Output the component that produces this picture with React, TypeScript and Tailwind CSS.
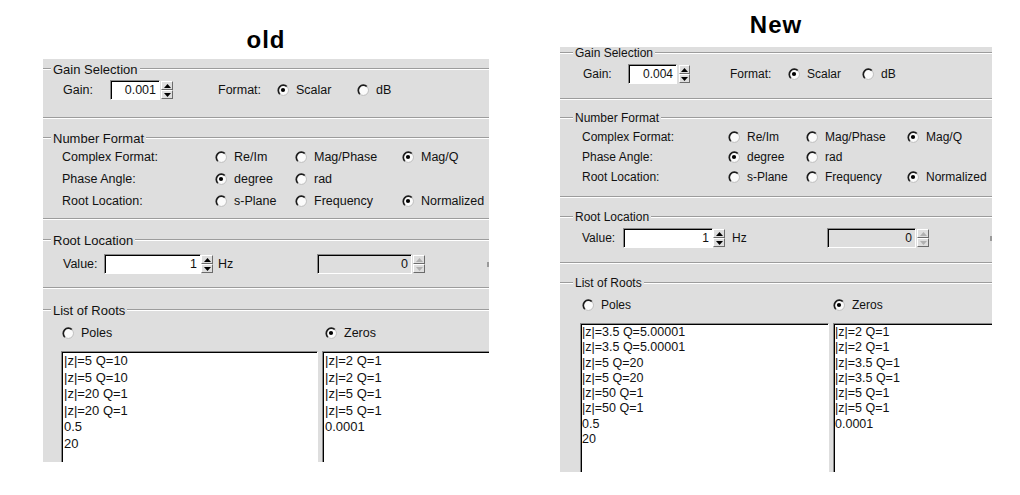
import React from 'react';

type Opt = [string, boolean];

const NUM_ROWS: { label: string; opts: Opt[] }[] = [
  { label: 'Complex Format:', opts: [['Re/Im', false], ['Mag/Phase', false], ['Mag/Q', true]] },
  { label: 'Phase Angle:', opts: [['degree', true], ['rad', false]] },
  { label: 'Root Location:', opts: [['s-Plane', false], ['Frequency', false], ['Normalized', true]] },
];

const OLD = {
  title: 'old',
  col: 'ml-[43px] w-[446px]',
  head: 'h-[59px] pt-[28px]',
  panel: 'h-[403px] pt-[3px]',
  titleH: 'h-[14px]',
  dash: 'w-[8px]',
  titleText: 'text-[13px]',
  label: 'text-[12.5px]',
  gainBox: 'h-[41px] pt-[5px]',
  gainPl: 'pl-[20px]',
  gainLabel: 'w-[47px]',
  gainInput: 'w-[50px]',
  gainSpin: 'ml-[1px] w-[12px]',
  formatGap: 'ml-[45px] w-[59px]',
  scalarW: 'w-[80px]',
  gain: '0.001',
  gap1: 'mt-[12px]',
  numBox: 'h-[73px] pt-[1px]',
  rowH: 'h-[22px]',
  numPl: 'pl-[19px]',
  numLabel: 'w-[153px]',
  cols: ['w-[80px]', 'w-[107px]', 'w-[84px]'],
  gap2: 'mt-[13px]',
  valBox: 'h-[40px] pt-[7px]',
  valPl: 'pl-[20px]',
  valLabel: 'w-[41px]',
  valInput: 'w-[97px]',
  hz: 'ml-[5px] w-[99px]',
  disInput: 'w-[95px]',
  gap3: 'mt-[14px]',
  rootsBox: 'pt-[8px]',
  polesPl: 'pl-[19px]',
  polesW: 'w-[263px]',
  listMl: 'ml-[18px]',
  leftW: 'w-[257px]',
  listText: 'text-[13px] leading-[16.6px] pl-[2px]',
  poles: ['|z|=5 Q=10', '|z|=5 Q=10', '|z|=20 Q=1', '|z|=20 Q=1', '0.5', '20'],
  zeros: ['|z|=2 Q=1', '|z|=2 Q=1', '|z|=5 Q=1', '|z|=5 Q=1', '0.0001'],
};

const NEW = {
  title: 'New',
  col: 'ml-[71px] w-[432px]',
  head: 'h-[47px] pt-[13px]',
  panel: 'h-[425px] pt-0',
  titleH: 'h-[12px]',
  dash: 'w-[13px]',
  titleText: 'text-[12px]',
  label: 'text-[12px]',
  gainBox: 'h-[39px] pt-[6px]',
  gainPl: 'pl-[23px]',
  gainLabel: 'w-[45px]',
  gainInput: 'w-[49px]',
  gainSpin: 'ml-[2px] w-[11px]',
  formatGap: 'ml-[40px] w-[58px]',
  scalarW: 'w-[74px]',
  gain: '0.004',
  gap1: 'mt-[12px]',
  numBox: 'h-[72px] pt-[3px]',
  rowH: 'h-[20px]',
  numPl: 'pl-[22px]',
  numLabel: 'w-[146px]',
  cols: ['w-[78px]', 'w-[101px]', 'w-[80px]'],
  gap2: 'mt-[13px]',
  valBox: 'h-[39px] pt-[5px]',
  valPl: 'pl-[22px]',
  valLabel: 'w-[41px]',
  valInput: 'w-[90px]',
  hz: 'ml-[7px] w-[95px]',
  disInput: 'w-[89px]',
  gap3: 'mt-[13px]',
  rootsBox: 'pt-[8px]',
  polesPl: 'pl-[22px]',
  polesW: 'w-[251px]',
  listMl: 'ml-[20px]',
  leftW: 'w-[249px]',
  listText: 'text-[12.5px] leading-[15.3px] pl-[1px]',
  poles: ['|z|=3.5 Q=5.00001', '|z|=3.5 Q=5.00001', '|z|=5 Q=20', '|z|=5 Q=20', '|z|=50 Q=1', '|z|=50 Q=1', '0.5', '20'],
  zeros: ['|z|=2 Q=1', '|z|=2 Q=1', '|z|=3.5 Q=1', '|z|=3.5 Q=1', '|z|=5 Q=1', '|z|=5 Q=1', '0.0001'],
};

type Cfg = typeof OLD;

const Groove = ({ className = '' }: { className?: string }) => (
  <div className={`h-0 border-t border-b border-t-[#9c9c9c] border-b-white ${className}`} />
);

function GroupTitle({ title, c }: { title: string; c: Cfg }) {
  return (
    <div className={`flex items-center ${c.titleH}`}>
      <Groove className={`shrink-0 ${c.dash}`} />
      <span className={`px-[2px] whitespace-nowrap leading-none ${c.titleText}`}>{title}</span>
      <Groove className="flex-1" />
    </div>
  );
}

// sunken round radio, dark upper-left rim
function Radio({ checked }: { checked?: boolean }) {
  return (
    <svg width="12" height="12" viewBox="0 0 12 12" className="shrink-0">
      <circle cx="6" cy="6" r="5" fill="#fbfbfb" />
      <path d="M2.9 10.1 A5 5 0 0 1 9.9 2.6" stroke="#1c1c1c" strokeWidth="1.7" fill="none" />
      <path d="M9.9 2.6 A5 5 0 0 1 2.9 10.1" stroke="#c4c4c4" strokeWidth="1" fill="none" />
      {checked && <circle cx="6" cy="6" r="2.1" fill="#000" />}
    </svg>
  );
}

function RadioItem({ label, checked, w = '' }: { label: string; checked?: boolean; w?: string }) {
  return (
    <div className={`flex items-center shrink-0 ${w}`}>
      <Radio checked={checked} />
      <span className="ml-[7px] whitespace-nowrap">{label}</span>
    </div>
  );
}

function Field({ w, value, disabled }: { w: string; value: string; disabled?: boolean }) {
  return (
    <div
      className={`h-[20px] shrink-0 flex items-center justify-end pr-[3px] leading-none border border-t-[#8a8a8a] border-l-[#8a8a8a] border-r-white border-b-white shadow-[inset_1px_1px_0_#000] ${disabled ? 'bg-[#dedede]' : 'bg-white'} ${w}`}
    >
      {value}
    </div>
  );
}

function Arrow({ up, color }: { up?: boolean; color: string }) {
  return (
    <svg width="7" height="4" viewBox="0 0 7 4">
      <polygon points={up ? '0,4 3.5,0 7,4' : '0,0 3.5,4 7,0'} fill={color} />
    </svg>
  );
}

function Spin({ disabled, className }: { disabled?: boolean; className: string }) {
  const color = disabled ? '#b0b0b0' : '#000';
  const half = 'flex-1 flex items-center justify-center bg-[#dedede] border border-t-white border-l-white border-r-[#6b6b6b] border-b-[#6b6b6b]';
  return (
    <div className={`h-[18px] flex flex-col shrink-0 ${className}`}>
      <div className={half}>
        <Arrow up color={color} />
      </div>
      <div className={half}>
        <Arrow color={color} />
      </div>
    </div>
  );
}

function ListBox({ w, rows, c }: { w: string; rows: string[]; c: Cfg }) {
  return (
    <div
      className={`h-[300px] shrink-0 bg-white border border-t-[#8a8a8a] border-l-[#8a8a8a] border-r-white border-b-white shadow-[inset_1px_1px_0_#000] pt-[1px] ${c.listText} ${w}`}
    >
      {rows.map((r, i) => (
        <div key={i} className="whitespace-nowrap">{r}</div>
      ))}
    </div>
  );
}

function Shot({ c }: { c: Cfg }) {
  return (
    <div className={`shrink-0 ${c.col}`}>
      <div className={`text-center text-[24px] font-bold leading-[24px] tracking-[1px] ${c.head}`}>{c.title}</div>
      <div className={`bg-[#dedede] overflow-hidden text-[#111] ${c.panel} ${c.label}`}>
        <GroupTitle title="Gain Selection" c={c} />
        <div className={c.gainBox}>
          <div className={`flex items-center h-[18px] ${c.gainPl}`}>
            <span className={`shrink-0 ${c.gainLabel}`}>Gain:</span>
            <Field w={`h-[18px] ${c.gainInput}`} value={c.gain} />
            <Spin className={c.gainSpin} />
            <span className={`shrink-0 ${c.formatGap}`}>Format:</span>
            <RadioItem w={c.scalarW} checked label="Scalar" />
            <RadioItem label="dB" />
          </div>
        </div>
        <Groove />

        <div className={c.gap1}>
          <GroupTitle title="Number Format" c={c} />
        </div>
        <div className={c.numBox}>
          {NUM_ROWS.map(row => (
            <div key={row.label} className={`flex items-center ${c.rowH} ${c.numPl}`}>
              <span className={`shrink-0 whitespace-nowrap ${c.numLabel}`}>{row.label}</span>
              {row.opts.map(([label, on], i) => (
                <RadioItem key={label} w={c.cols[i]} label={label} checked={on} />
              ))}
            </div>
          ))}
        </div>
        <Groove />

        <div className={c.gap2}>
          <GroupTitle title="Root Location" c={c} />
        </div>
        <div className={c.valBox}>
          <div className={`flex items-center h-[20px] ${c.valPl}`}>
            <span className={`shrink-0 ${c.valLabel}`}>Value:</span>
            <Field w={c.valInput} value="1" />
            <Spin className="w-[12px]" />
            <span className={`shrink-0 ${c.hz}`}>Hz</span>
            <Field w={c.disInput} value="0" disabled />
            <Spin disabled className="ml-[1px] w-[12px]" />
            <div className="flex-1 flex justify-end">
              <div className="w-[2px] h-[5px] bg-[#9a9a9a]" />
            </div>
          </div>
        </div>
        <Groove />

        <div className={c.gap3}>
          <GroupTitle title="List of Roots" c={c} />
        </div>
        <div className={c.rootsBox}>
          <div className={`flex items-center h-[16px] ${c.polesPl}`}>
            <RadioItem w={c.polesW} label="Poles" />
            <RadioItem checked label="Zeros" />
          </div>
          <div className={`mt-[10px] flex gap-[4px] ${c.listMl}`}>
            <ListBox w={c.leftW} rows={c.poles} c={c} />
            <ListBox w="w-[220px]" rows={c.zeros} c={c} />
          </div>
        </div>
      </div>
    </div>
  );
}

export default function App() {
  return (
    <div className="w-[1020px] h-[495px] bg-white overflow-hidden flex items-start font-['Liberation_Sans',_Arial,_sans-serif] text-black">
      <Shot c={OLD} />
      <Shot c={NEW} />
    </div>
  );
}
